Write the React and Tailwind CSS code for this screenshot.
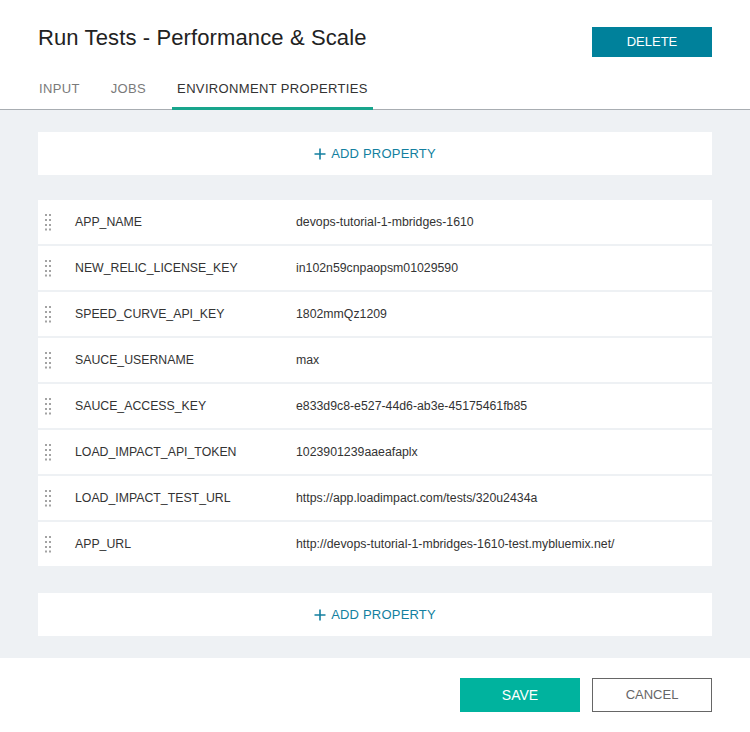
import React from 'react';

// --- Property data ---
const properties = [
  { name: 'APP_NAME', value: 'devops-tutorial-1-mbridges-1610' },
  { name: 'NEW_RELIC_LICENSE_KEY', value: 'in102n59cnpaopsm01029590' },
  { name: 'SPEED_CURVE_API_KEY', value: '1802mmQz1209' },
  { name: 'SAUCE_USERNAME', value: 'max' },
  { name: 'SAUCE_ACCESS_KEY', value: 'e833d9c8-e527-44d6-ab3e-45175461fb85' },
  { name: 'LOAD_IMPACT_API_TOKEN', value: '1023901239aaeafaplx' },
  { name: 'LOAD_IMPACT_TEST_URL', value: 'https://app.loadimpact.com/tests/320u2434a' },
  { name: 'APP_URL', value: 'http://devops-tutorial-1-mbridges-1610-test.mybluemix.net/' },
];

// Drag handle: 2 columns x 4 rows of dots
const Grip = () => (
  <svg width="7" height="17" viewBox="0 0 7 17" className="shrink-0">
    {[0, 5, 10, 14.5].map((y) => (
      <g key={y} fill="#a3a3a3">
        <rect x="0" y={y} width="2" height="2" />
        <rect x="4" y={y} width="2" height="2" />
      </g>
    ))}
  </svg>
);

const PlusIcon = () => (
  <svg width="12" height="12" viewBox="0 0 12 12" className="mr-[5px]">
    <path d="M6 0.5V11.5M0.5 6H11.5" stroke="#137fa0" strokeWidth="1.6" />
  </svg>
);

const AddProperty = () => (
  <button
    type="button"
    className="h-[43px] w-full bg-white flex items-center justify-center text-[13px] tracking-[0.2px] text-[#137fa0]"
  >
    <PlusIcon />
    ADD PROPERTY
  </button>
);

const App = () => {
  const tabs = ['INPUT', 'JOBS', 'ENVIRONMENT PROPERTIES'];

  return (
    <div
      className="w-[750px] h-[732px] bg-white flex flex-col text-[#333]"
      style={{ fontFamily: '"Liberation Sans", Arial, sans-serif' }}
    >
      {/* Header */}
      <div className="flex justify-between items-start pt-[23px] pl-[38px] pr-[38px]">
        <h1 className="text-[22px] leading-[30px] tracking-[0.12px] text-[#222]">Run Tests - Performance &amp; Scale</h1>
        <button type="button" className="mt-[4px] w-[120px] h-[30px] bg-[#00819b] text-white text-[13px]">
          DELETE
        </button>
      </div>

      {/* Tabs */}
      <div className="flex gap-[21px] pl-[34px] border-b border-[#a8adb2]">
        {tabs.map((tab, i) => {
          const active = i === tabs.length - 1;
          return (
            <div
              key={tab}
              className={`-mb-px px-[5px] pt-[24px] pb-[10px] leading-[16px] text-[13px] tracking-[0.35px] border-b-[3px] ${
                active ? 'border-[#18a58c] text-[#333]' : 'border-transparent text-[#7a7a7a]'
              }`}
            >
              {tab}
            </div>
          );
        })}
      </div>

      {/* Properties panel */}
      <div className="bg-[#eef1f4] px-[38px] pt-[22px] pb-[22px]">
        <AddProperty />

        <div className="mt-[25px] flex flex-col gap-[2px]">
          {properties.map((p) => (
            <div key={p.name} className="h-[44px] bg-white flex items-center pl-[7px] text-[12.3px] text-[#333]">
              <Grip />
              <span className="ml-[23px] w-[221px]">{p.name}</span>
              <span>{p.value}</span>
            </div>
          ))}
        </div>

        <div className="mt-[27px]">
          <AddProperty />
        </div>
      </div>

      {/* Footer */}
      <div className="flex justify-end gap-[12px] pt-[20px] pr-[38px]">
        <button type="button" className="w-[120px] h-[34px] bg-[#00b39e] text-white text-[14px]">
          SAVE
        </button>
        <button type="button" className="w-[120px] h-[34px] border border-[#666] text-[#666] text-[13px]">
          CANCEL
        </button>
      </div>
    </div>
  );
};

export default App;
